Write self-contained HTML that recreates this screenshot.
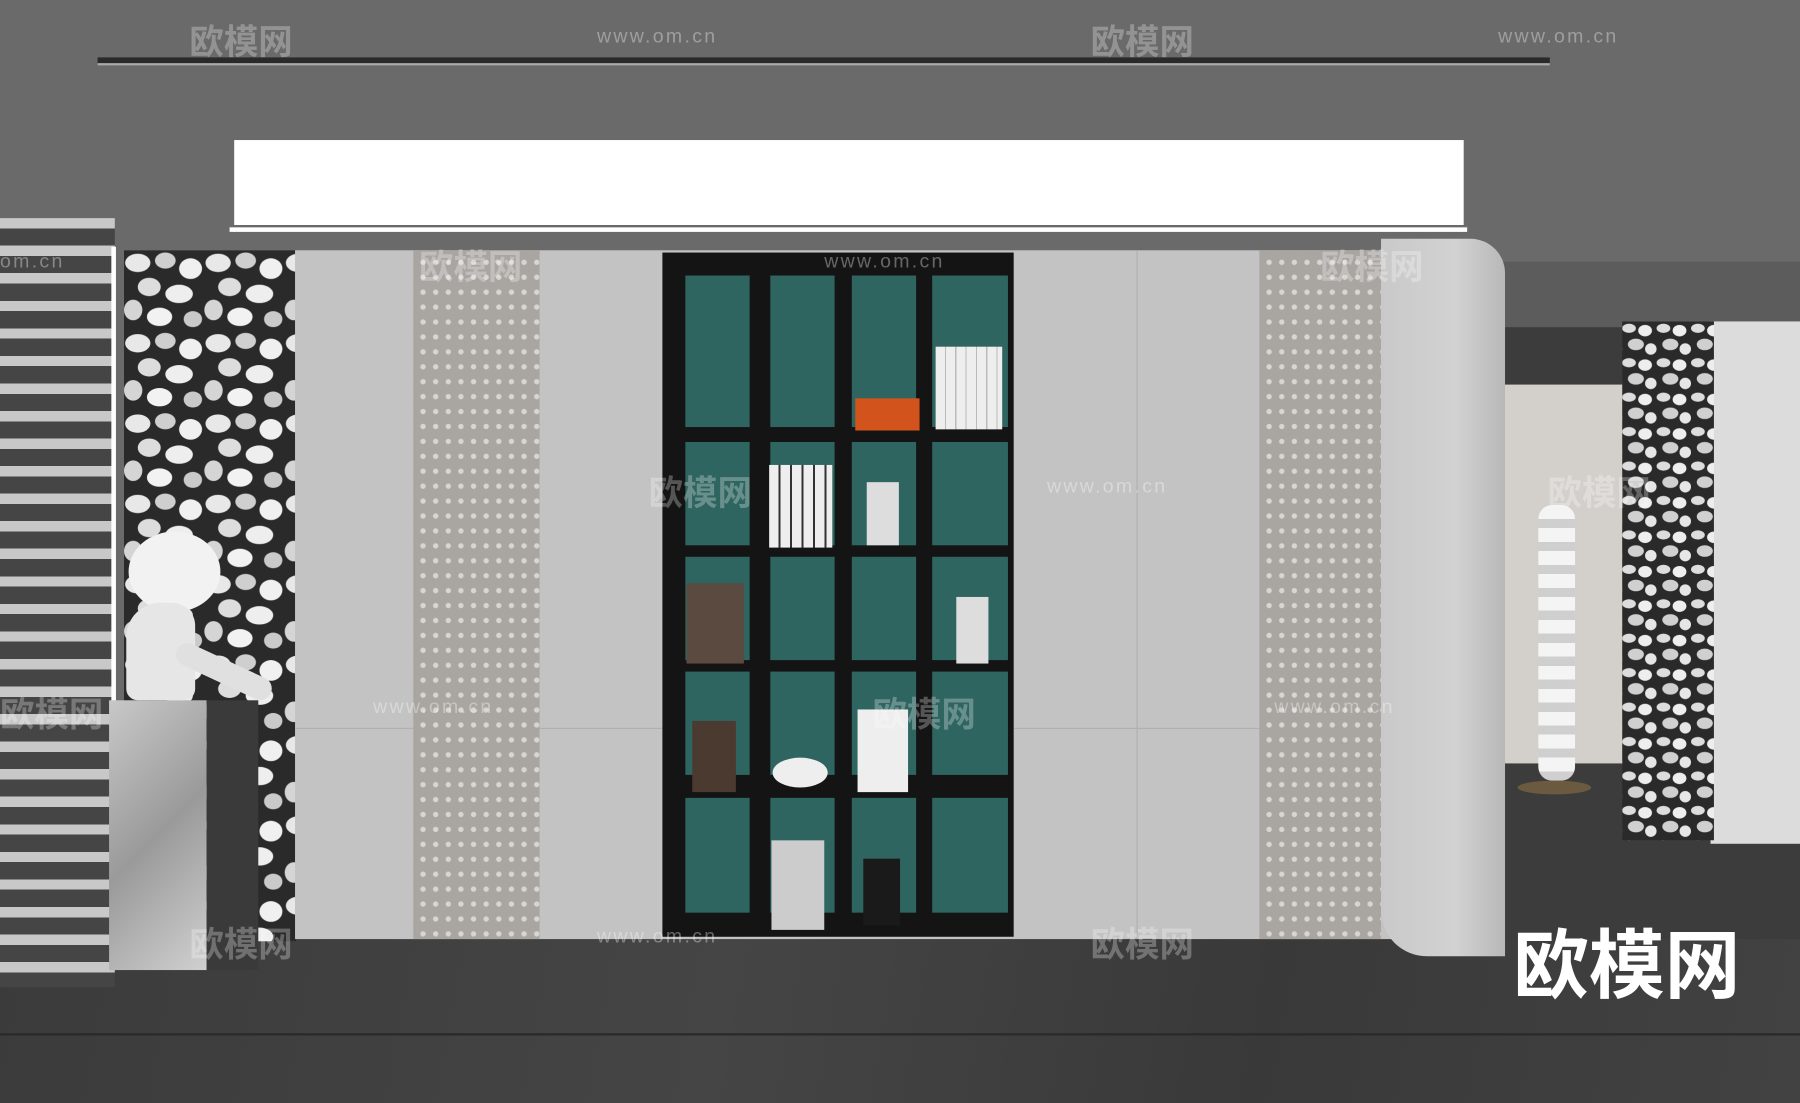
<!DOCTYPE html>
<html><head><meta charset="utf-8"><style>
html,body{margin:0;padding:0;width:1800px;height:1103px;overflow:hidden;background:#3a3a3a}
#s{position:absolute;left:0;top:0;width:1568px;height:961px;transform:scale(1.148);transform-origin:0 0;background:#6a6a6a;overflow:hidden;font-family:"Liberation Sans","Noto Sans CJK SC",sans-serif}
.a{position:absolute}
.dots{background-color:#a9a5a1;background-image:radial-gradient(circle,#d8d6d3 2px,transparent 2.6px);background-size:11px 13px;background-position:3px 4px}
.wm{position:absolute;color:rgba(255,255,255,.28);font-size:30px;font-weight:bold}
.wu{position:absolute;color:rgba(255,255,255,.35);font-size:17px;letter-spacing:2px}
.cell{position:absolute;background:#2e6560}
</style></head><body><div id="s">
<svg width="0" height="0" style="position:absolute"><defs>
<pattern id="tz" width="70" height="70" patternUnits="userSpaceOnUse">
<rect width="70" height="70" fill="#2a2a2a"/>
<ellipse cx="12" cy="11" rx="11" ry="8" fill="#e8e8e8"/><ellipse cx="36" cy="9" rx="9" ry="7" fill="#cfcfcf"/><ellipse cx="58" cy="16" rx="10" ry="9" fill="#f0f0f0"/>
<ellipse cx="22" cy="32" rx="10" ry="8" fill="#ddd"/><ellipse cx="48" cy="38" rx="12" ry="8" fill="#eee"/><ellipse cx="8" cy="52" rx="8" ry="9" fill="#d5d5d5"/>
<ellipse cx="31" cy="58" rx="11" ry="8" fill="#f2f2f2"/><ellipse cx="60" cy="60" rx="8" ry="7" fill="#cacaca"/></pattern>
<pattern id="tz2" width="30" height="30" patternUnits="userSpaceOnUse">
<rect width="30" height="30" fill="#2a2a2a"/><ellipse cx="6" cy="6" rx="6" ry="4" fill="#ddd"/><ellipse cx="20" cy="8" rx="6" ry="5" fill="#eee"/><ellipse cx="12" cy="20" rx="7" ry="5" fill="#d0d0d0"/><ellipse cx="25" cy="24" rx="5" ry="5" fill="#e6e6e6"/></pattern>
</defs></svg>
<div class="a" style="left:85px;top:50px;width:1265px;height:5px;background:#2a2a2a;border-bottom:2px solid #aaa"></div>
<div class="a" style="left:204px;top:122px;width:1071px;height:74px;background:#fff"></div>
<div class="a" style="left:200px;top:197px;width:1078px;height:4px;background:#fff;border-top:1px solid #555"></div>
<div class="a" style="left:1300px;top:228px;width:268px;height:57px;background:#5c5c5c"></div>
<div class="a" style="left:1300px;top:285px;width:268px;height:676px;background:#3c3c3c"></div>
<div class="a" style="left:1310px;top:335px;width:110px;height:330px;background:#d3d0cc"></div>
<div class="a" style="left:1490px;top:280px;width:78px;height:455px;background:#dcdcdc"></div>
<svg class="a" style="left:1413px;top:280px" width="80" height="452"><rect width="80" height="452" fill="url(#tz2)"/></svg>
<div class="a" style="left:1340px;top:440px;width:32px;height:240px;background:repeating-linear-gradient(#f4f4f4 0 12px,#cfcfcf 12px 20px);border-radius:12px"></div>
<div class="a" style="left:1322px;top:680px;width:64px;height:12px;background:#6b5a40;border-radius:50%"></div>
<div class="a" style="left:0;top:818px;width:1568px;height:143px;background:linear-gradient(100deg,#3b3b3b,#454545 40%,#393939 70%,#424242)"></div>
<div class="a" style="left:0;top:900px;width:1568px;height:2px;background:#2a2a2a"></div>
<div class="a" style="left:0;top:190px;width:100px;height:670px;background:repeating-linear-gradient(#c8c8c8 0 9px,#454545 9px 24px)"></div>
<div class="a" style="left:97px;top:215px;width:4px;height:600px;background:#fff"></div>
<svg class="a" style="left:108px;top:218px" width="150" height="602"><rect width="150" height="602" fill="url(#tz)"/></svg>
<div class="a" style="left:257px;top:218px;width:1000px;height:600px;background:#c3c3c3"></div>
<div class="a" style="left:257px;top:634px;width:1000px;height:1px;background:#b0b0b0"></div>
<div class="a" style="left:990px;top:218px;width:1px;height:600px;background:#b0b0b0"></div>
<div class="a dots" style="left:360px;top:218px;width:110px;height:600px"></div>
<div class="a dots" style="left:1097px;top:218px;width:106px;height:600px"></div>
<div class="a" style="left:1203px;top:208px;width:108px;height:625px;background:linear-gradient(90deg,#c9c9c9,#d2d2d2 60%,#b8b8b8);border-radius:0 30px 0 40px"></div>
<div class="a" style="left:577px;top:220px;width:306px;height:596px;background:#141414"></div>
<div id="cells"></div>
<div class="a" style="left:95px;top:610px;width:85px;height:235px;background:linear-gradient(135deg,#c8c8c8,#9a9a9a 50%,#d0d0d0)"></div>
<div class="a" style="left:180px;top:610px;width:45px;height:235px;background:#3a3a3a"></div>
<div class="a" style="left:112px;top:463px;width:80px;height:70px;background:#f2f2f2;border-radius:50%"></div>
<div class="a" style="left:110px;top:525px;width:60px;height:85px;background:#e6e6e6;border-radius:30px 20px 10px 10px"></div>
<div class="a" style="left:150px;top:575px;width:90px;height:20px;background:#e0e0e0;border-radius:10px;transform:rotate(25deg)"></div>
<div class="wm" style="left:165px;top:12px">欧模网</div><div class="wm" style="left:950px;top:12px">欧模网</div>
<div class="wm" style="left:365px;top:208px">欧模网</div><div class="wm" style="left:1150px;top:208px">欧模网</div>
<div class="wm" style="left:565px;top:405px">欧模网</div><div class="wm" style="left:1348px;top:405px">欧模网</div>
<div class="wm" style="left:760px;top:598px">欧模网</div><div class="wm" style="left:0px;top:598px">欧模网</div>
<div class="wm" style="left:165px;top:798px">欧模网</div><div class="wm" style="left:950px;top:798px">欧模网</div>
<div class="wu" style="left:520px;top:22px">www.om.cn</div><div class="wu" style="left:1305px;top:22px">www.om.cn</div>
<div class="wu" style="left:718px;top:218px">www.om.cn</div><div class="wu" style="left:912px;top:414px">www.om.cn</div>
<div class="wu" style="left:325px;top:606px">www.om.cn</div><div class="wu" style="left:1110px;top:606px">www.om.cn</div>
<div class="wu" style="left:520px;top:806px">www.om.cn</div><div class="wu" style="left:0px;top:218px">om.cn</div>
<div class="a" style="left:1318px;top:788px;color:#fff;font-size:66px;font-weight:bold">欧模网</div>
</div>
<script>
var c=document.getElementById('cells'),xs=[597,671,742,812],ys=[240,385,485,585,695],h=[132,90,90,90,100],w=[56,56,56,66];
var html='';for(var r=0;r<5;r++)for(var k=0;k<4;k++){html+='<div class="cell" style="left:'+xs[k]+'px;top:'+ys[r]+'px;width:'+w[k]+'px;height:'+h[r]+'px"></div>';}
c.innerHTML=html;
var b='<div class="a" style="left:745px;top:347px;width:56px;height:28px;background:#d2541c"></div>'+
'<div class="a" style="left:815px;top:302px;width:58px;height:72px;background:repeating-linear-gradient(90deg,#eee 0 8px,#bbb 8px 9px)"></div>'+
'<div class="a" style="left:670px;top:405px;width:55px;height:72px;background:repeating-linear-gradient(90deg,#eee 0 8px,#333 8px 10px)"></div>'+
'<div class="a" style="left:755px;top:420px;width:28px;height:55px;background:#ddd"></div>'+
'<div class="a" style="left:598px;top:508px;width:50px;height:70px;background:#5a4a40"></div>'+
'<div class="a" style="left:833px;top:520px;width:28px;height:58px;background:#ddd"></div>'+
'<div class="a" style="left:603px;top:628px;width:38px;height:62px;background:#4a3a30"></div>'+
'<div class="a" style="left:747px;top:618px;width:44px;height:72px;background:#eee"></div>'+
'<div class="a" style="left:673px;top:660px;width:48px;height:26px;background:#eee;border-radius:50%"></div>'+
'<div class="a" style="left:672px;top:732px;width:46px;height:78px;background:#ccc"></div>'+
'<div class="a" style="left:752px;top:748px;width:32px;height:58px;background:#1a1a1a"></div>';
c.innerHTML+=b;
</script>
</body></html>
